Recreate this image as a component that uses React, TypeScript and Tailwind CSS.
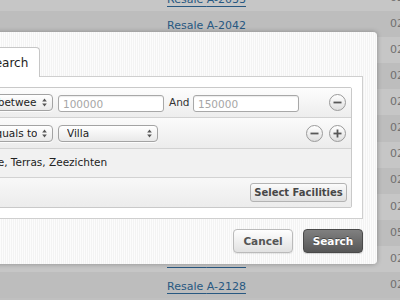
import React from "react";

const rows = [
  { id: "A-2033", date: "02-03-2012" },
  { id: "A-2042", date: "02-03-2012" },
  { id: "A-2051", date: "02-03-2012" },
  { id: "A-2060", date: "02-03-2012" },
  { id: "A-2077", date: "02-03-2012" },
  { id: "A-2083", date: "02-03-2012" },
  { id: "A-2095", date: "02-03-2012" },
  { id: "A-2101", date: "02-03-2012" },
  { id: "A-2110", date: "02-03-2012" },
  { id: "A-2116", date: "05-03-2012" },
  { id: "A-2121", date: "02-03-2012" },
  { id: "A-2128", date: "02-03-2012" },
];

const Arrows = () => (
  <svg width="5" height="9" viewBox="0 0 5 9" className="shrink-0">
    <path d="M2.5 0.5 L4.8 3.5 L0.2 3.5 Z" fill="#555" />
    <path d="M2.5 8.5 L4.8 5.5 L0.2 5.5 Z" fill="#555" />
  </svg>
);

const FakeSelect = ({ text, className }: { text: string; className: string }) => (
  <div
    className={
      "h-[17px] shrink-0 flex items-center rounded-[4px] border border-[#a3a3a3] bg-[linear-gradient(#ffffff,#e9e9e9)] shadow-[0_1px_0_rgba(255,255,255,0.8)] " +
      className
    }
  >
    <span className="flex-1 overflow-hidden whitespace-nowrap leading-none text-[10.5px] text-[#222]">{text}</span>
    <span className="w-[15px] flex justify-center">
      <Arrows />
    </span>
  </div>
);

const FakeInput = ({ value }: { value: string }) => (
  <input
    readOnly
    placeholder={value}
    className="h-[17px] w-[106px] shrink-0 rounded-[3px] border border-[#a8a8a8] bg-white pl-[4px] text-[10.5px] leading-none text-[#222] placeholder:text-[#a6a6a6] outline-none shadow-[inset_0_1px_1px_rgba(0,0,0,0.08)]"
  />
);

const Circle = ({ plus }: { plus?: boolean }) => (
  <div className="w-[17px] h-[17px] shrink-0 rounded-full border border-[#9a9a9a] bg-[linear-gradient(#ffffff,#dedede)] flex items-center justify-center">
    <svg width="9" height="9" viewBox="0 0 9 9">
      <rect x="0.5" y="3.6" width="8" height="1.8" fill="#575757" />
      {plus && <rect x="3.6" y="0.5" width="1.8" height="8" fill="#575757" />}
    </svg>
  </div>
);

export default function App() {
  return (
    <div
      className="relative w-[400px] h-[300px] overflow-hidden bg-[#c0c0c0]"
      style={{ fontFamily: '"DejaVu Sans", "Liberation Sans", sans-serif' }}
    >
      <div className="-mt-[15px]">
        {rows.map((r, i) => (
          <div
            key={r.id}
            className={
              "h-[26.1px] flex items-center pl-[167px] " + (i % 2 === 0 ? "bg-[#c6c6c6]" : "bg-[#bdbdbd]")
            }
          >
            <span className="w-[223px] shrink-0">
              <span className="text-[11px] text-[#285881] underline decoration-[#285881] underline-offset-[3px]">
                Resale {r.id}
              </span>
            </span>
            <span className="whitespace-nowrap text-[11px] text-[#707070]">{r.date}</span>
          </div>
        ))}
      </div>

      <div className="absolute left-[-133px] top-[32px] w-[510px] h-[232px] rounded-[4px] pt-[15px] pl-[10px] pr-[14px] bg-[repeating-linear-gradient(90deg,#f3f3f3_0px,#f3f3f3_1px,#fcfcfc_1px,#fcfcfc_2px)] shadow-[0_0_5px_rgba(0,0,0,0.3)]">
        <div className="flex ml-[35px]">
          <div className="relative z-10 -mb-px h-[30px] px-[11px] flex items-center rounded-t-[4px] border border-b-0 border-[#c6c6c6] bg-white text-[12px] text-[#222]">
            Advanced Search
          </div>
        </div>

        <div className="h-[143px] border border-[#cfcfcf] bg-white p-[10px]">
          <div className="rounded-[2px] border border-[#c9c9c9] overflow-hidden">
            <div className="h-[29px] flex items-center pl-[6px] pr-[5px] bg-[linear-gradient(#fdfdfd,#ededed)]">
              <FakeSelect text="Price" className="w-[80px] pl-[7px]" />
              <FakeSelect text="is between" className="ml-[5px] w-[73px] pl-[5px]" />
              <div className="ml-[5px]">
                <FakeInput value="100000" />
              </div>
              <span className="ml-[5px] w-[20px] text-[10.5px] text-[#333] leading-none whitespace-nowrap">And</span>
              <div className="ml-[4px]">
                <FakeInput value="150000" />
              </div>
              <div className="flex-1" />
              <Circle />
            </div>
            <div className="h-[31px] border-t border-[#d2d2d2] flex items-center pl-[6px] pr-[5px] bg-[linear-gradient(#fbfbfb,#ececec)]">
              <FakeSelect text="Type" className="w-[80px] pl-[7px]" />
              <FakeSelect text="equals to" className="ml-[5px] w-[73px] pl-[8px]" />
              <FakeSelect text="Villa" className="ml-[5px] w-[100px] pl-[8px]" />
              <div className="flex-1" />
              <Circle />
              <div className="ml-[6px]">
                <Circle plus />
              </div>
            </div>
            <div className="h-[29px] border-t border-[#d2d2d2] flex items-center pl-[7px] bg-[#f1f1f1] text-[10.5px] text-[#222] whitespace-nowrap">
              Tuin, Balkon, Garage, Terras, Zeezichten
            </div>
            <div className="h-[30px] border-t border-[#d2d2d2] flex items-center justify-end pr-[4px] bg-[linear-gradient(#f8f8f8,#ececec)]">
              <button className="h-[19px] w-[97px] rounded-[3px] border border-[#b3b3b3] bg-[linear-gradient(#fbfbfb,#dfdfdf)] text-[10px] font-bold text-[#474747] leading-none">
                Select Facilities
              </button>
            </div>
          </div>
        </div>

        <div className="mt-[10px] flex justify-end gap-[10px]">
          <button className="h-[24px] w-[60px] rounded-[4px] border border-[#bababa] bg-[linear-gradient(#fefefe,#e1e1e1)] text-[10.5px] font-bold text-[#555] leading-none shadow-[0_1px_1px_rgba(0,0,0,0.08)]">
            Cancel
          </button>
          <button className="h-[24px] w-[60px] rounded-[4px] border border-[#4a4a4a] bg-[linear-gradient(#808080,#575757)] text-[10.5px] font-bold text-white leading-none [text-shadow:0_-1px_0_rgba(0,0,0,0.4)] shadow-[0_1px_1px_rgba(0,0,0,0.15)]">
            Search
          </button>
        </div>
      </div>
    </div>
  );
}
